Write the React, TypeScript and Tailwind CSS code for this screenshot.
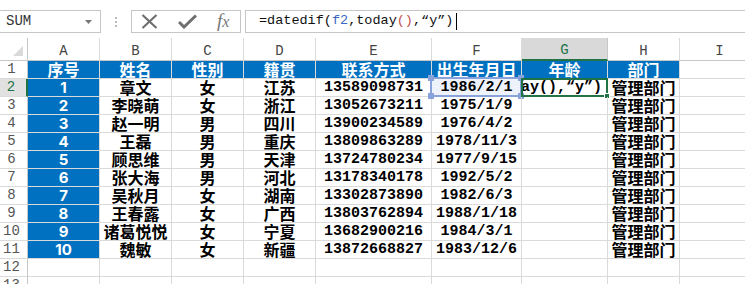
import React from 'react';

const cols = [
  { l: 'A', w: 'w-[72px]' },
  { l: 'B', w: 'w-[72px]' },
  { l: 'C', w: 'w-[72px]' },
  { l: 'D', w: 'w-[72px]' },
  { l: 'E', w: 'w-[116px]' },
  { l: 'F', w: 'w-[90px]' },
  { l: 'G', w: 'w-[86px]' },
  { l: 'H', w: 'w-[72px]' },
  { l: 'I', w: 'w-[80px]' },
];

const header = ['序号', '姓名', '性别', '籍贯', '联系方式', '出生年月日', '年龄', '部门'];

const people = [
  ['1', '章文', '女', '江苏', '13589098731', '1986/2/1'],
  ['2', '李晓萌', '女', '浙江', '13052673211', '1975/1/9'],
  ['3', '赵一明', '男', '四川', '13900234589', '1976/4/2'],
  ['4', '王磊', '男', '重庆', '13809863289', '1978/11/3'],
  ['5', '顾思维', '男', '天津', '13724780234', '1977/9/15'],
  ['6', '张大海', '男', '河北', '13178340178', '1992/5/2'],
  ['7', '吴秋月', '女', '湖南', '13302873890', '1982/6/3'],
  ['8', '王春露', '女', '广西', '13803762894', '1988/1/18'],
  ['9', '诸葛悦悦', '女', '宁夏', '13682900216', '1984/3/1'],
  ['10', '魏敏', '女', '新疆', '13872668827', '1983/12/6'],
];

const cjk = "font-['Noto_Sans_CJK_SC',sans-serif] font-bold text-[16px]";
const mono = "font-['Liberation_Mono','Noto_Sans_CJK_SC',monospace] font-bold text-[15px]";
const base = 'h-[18px] shrink-0 border-r border-b border-[#dadada] flex items-center justify-center whitespace-nowrap leading-[17px]';

const RowHead: React.FC<{ n: number; active?: boolean }> = ({ n, active }) => (
  <div
    className={`w-[28px] h-[18px] shrink-0 border-b border-[#dadada] flex items-center justify-center pr-[4px] font-['Liberation_Mono',monospace] text-[14px] leading-[17px] ${
      active ? 'bg-[#e1e1e1] text-[#217346] border-r-2 border-r-[#217346]' : 'text-[#555] border-r border-r-[#c6c6c6]'
    }`}
  >
    {n}
  </div>
);

const App: React.FC = () => {
  return (
    <div className="w-[745px] h-[284px] overflow-hidden bg-white select-none">
      {/* formula bar */}
      <div className="h-[38px] pt-[10px] flex items-start">
        <div className="w-[101px] h-[23px] border border-l-0 border-[#c6c6c6] flex items-center justify-between pl-[6px] pr-[8px]">
          <span className="font-['Liberation_Mono',monospace] text-[14px] text-[#333]">SUM</span>
          <svg width="7" height="4" viewBox="0 0 7 4"><path d="M0 0h7L3.5 4z" fill="#777" /></svg>
        </div>
        <div className="w-[30px] h-[23px] flex items-center justify-center">
          <div className="flex flex-col gap-[2px]">
            <span className="w-[2px] h-[2px] bg-[#bbb]" />
            <span className="w-[2px] h-[2px] bg-[#bbb]" />
            <span className="w-[2px] h-[2px] bg-[#bbb]" />
          </div>
        </div>
        <div className="w-[110px] h-[23px] border border-[#c6c6c6] flex items-center pl-[9px] gap-[20px]">
          <svg width="17" height="15" viewBox="0 0 17 15"><path d="M1.5 1L15.5 14M15.5 1L1.5 14" stroke="#6f6f6f" strokeWidth="2.2" /></svg>
          <svg width="19" height="15" viewBox="0 0 19 15"><path d="M1 8l5 5L18 1.5" stroke="#6f6f6f" strokeWidth="3" fill="none" /></svg>
          <span className="font-['Liberation_Serif',serif] italic text-[#777] text-[19px] leading-none -mt-[2px]">f<span className="text-[16px]">x</span></span>
        </div>
        <div className="w-[4px]" />
        <div className="flex-1 h-[23px] border border-r-0 border-[#c6c6c6] flex items-center pl-[13px] font-['Liberation_Mono',monospace] text-[13.5px] text-[#111] whitespace-nowrap">
          <span>=datedif(</span>
          <span className="text-[#3a67c0]">f2</span>
          <span>,today</span>
          <span className="text-[#c0504d]">()</span>
          <span>,“y”)</span>
          <span className="w-px h-[17px] bg-black ml-[3px]" />
        </div>
      </div>

      {/* column header */}
      <div className="flex h-[23px]">
        <div className="w-[28px] h-[23px] shrink-0 border-r border-b border-[#c6c6c6] relative">
          <svg className="absolute right-[4px] bottom-[4px]" width="10" height="10" viewBox="0 0 10 10"><path d="M10 0V10H0z" fill="#dadada" /></svg>
        </div>
        {cols.map((c) => (
          <div
            key={c.l}
            className={`${c.w} h-[23px] shrink-0 flex items-center justify-center pt-[3px] font-['Liberation_Mono',monospace] text-[14px] leading-none ${
              c.l === 'G'
                ? 'bg-[#d9d9d9] text-[#217346] border-b-2 border-[#217346] border-r border-r-[#c6c6c6]'
                : 'text-[#444] border-r border-b border-[#dadada] border-b-[#c6c6c6]'
            }`}
          >
            {c.l}
          </div>
        ))}
      </div>

      {/* row 1 */}
      <div className="flex">
        <RowHead n={1} />
        {header.map((h, i) => (
          <div key={h} className={`${cols[i].w} ${base} bg-[#0070c0] border-[#0070c0] text-white ${cjk}`}>{h}</div>
        ))}
        <div className={`${cols[8].w} ${base}`} />
      </div>

      {people.map((p, r) => (
        <div key={p[0]} className="flex">
          <RowHead n={r + 2} active={r === 0} />
          <div className={`${cols[0].w} ${base} bg-[#0070c0] border-[#0070c0] text-white font-['Inter',sans-serif] font-bold text-[15px]`}>{p[0]}</div>
          <div className={`${cols[1].w} ${base} ${cjk} text-black`}>{p[1]}</div>
          <div className={`${cols[2].w} ${base} ${cjk} text-black`}>{p[2]}</div>
          <div className={`${cols[3].w} ${base} ${cjk} text-black`}>{p[3]}</div>
          <div className={`${cols[4].w} ${base} ${mono} text-black`}>{p[4]}</div>
          <div className={`${cols[5].w} ${base} ${mono} text-black relative ${r === 0 ? 'bg-[#eef2fb]' : ''}`}>
            {p[5]}
            {r === 0 && (
              <div className="absolute -left-[2px] -top-[2px] -right-[1px] -bottom-[1px] border-2 border-[#8aa2dc] pointer-events-none">
                <span className="absolute -left-[4px] -top-[4px] w-[6px] h-[6px] bg-[#8aa2dc]" />
                <span className="absolute -right-[4px] -top-[4px] w-[6px] h-[6px] bg-[#8aa2dc]" />
                <span className="absolute -left-[4px] -bottom-[4px] w-[6px] h-[6px] bg-[#8aa2dc]" />
                <span className="absolute -right-[4px] -bottom-[4px] w-[6px] h-[6px] bg-[#8aa2dc]" />
              </div>
            )}
          </div>
          <div className={`${cols[6].w} ${base} ${mono} text-black relative`}>
            {r === 0 && (
              <>
                <div className="w-full overflow-hidden flex justify-end pr-[5px]">
                  <span className="whitespace-nowrap">=datedif(f2,today(),“y”)</span>
                </div>
                <div className="absolute -left-[1px] -top-[1px] -right-[1px] -bottom-[1px] border-2 border-[#217346]">
                  <span className="absolute -right-[4px] -bottom-[4px] w-[6px] h-[6px] bg-[#217346] border border-white" />
                </div>
              </>
            )}
          </div>
          <div className={`${cols[7].w} ${base} ${cjk} text-black`}>管理部门</div>
          <div className={`${cols[8].w} ${base}`} />
        </div>
      ))}

      {[12, 13].map((n) => (
        <div key={n} className="flex">
          <RowHead n={n} />
          {cols.map((c) => (
            <div key={c.l} className={`${c.w} ${base}`} />
          ))}
        </div>
      ))}
    </div>
  );
};

export default App;
